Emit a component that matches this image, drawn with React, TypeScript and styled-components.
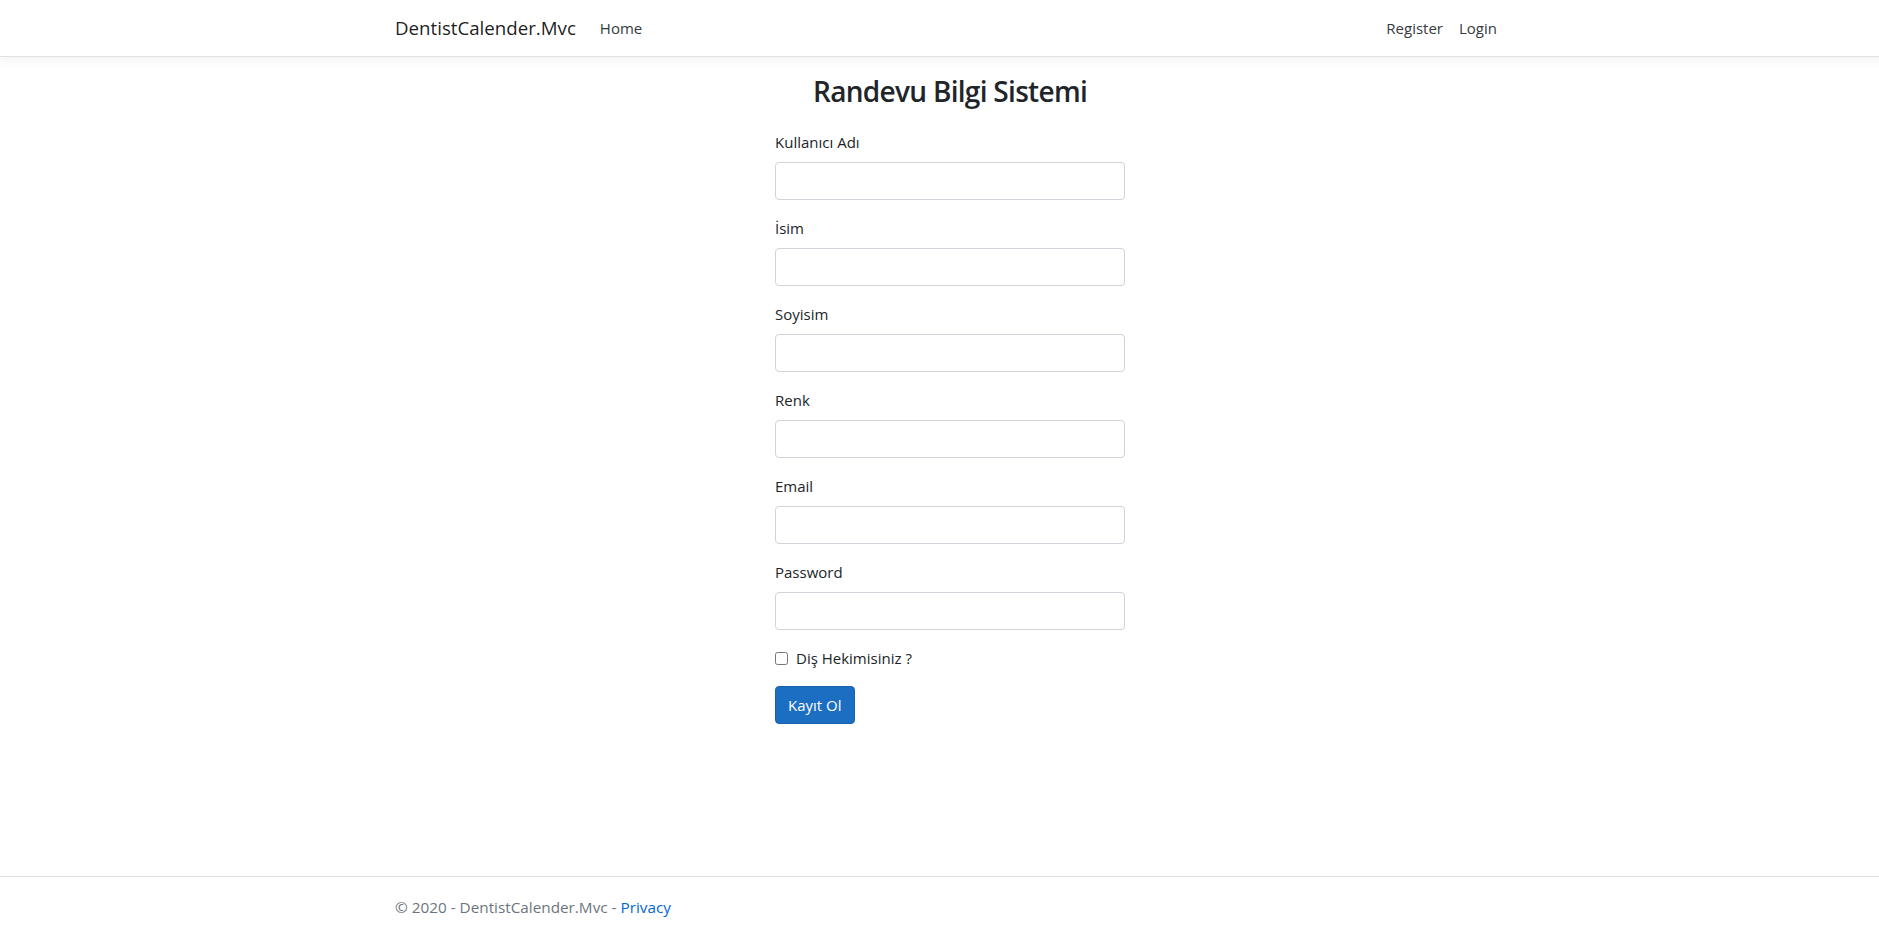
import styled, { createGlobalStyle } from "styled-components";

const GlobalStyle = createGlobalStyle`
  html,
  body {
    margin: 0;
    padding: 0;
    overflow: hidden;
    background: #fff;
  }
  body {
    font-family: "Open Sans", "Noto Sans", "Liberation Sans", sans-serif;
    font-size: 15px;
    line-height: 24px;
    color: #212529;
  }
  * {
    box-sizing: border-box;
  }
`;

// the original page was a little wider than this window, so its centre sits at 950px
const Page = styled.div`
  width: 1900px;
  min-height: 937px;
  display: flex;
  flex-direction: column;
`;

const Container = styled.div`
  width: 1140px;
  margin: 0 auto;
  padding: 0 15px;
`;

const NavBar = styled.nav`
  padding: 8px 16px;
  background: #fff;
  border-bottom: 1px solid #dee2e6;
  box-shadow: 0 4px 12px rgba(0, 0, 0, 0.05);
`;

const NavInner = styled(Container)`
  display: flex;
  align-items: center;
  padding: 0;
  width: 1110px;
`;

const Brand = styled.a`
  font-size: 18.7px;
  line-height: 30px;
  padding: 5px 0;
  margin-right: 16px;
  color: rgba(0, 0, 0, 0.9);
  text-decoration: none;
  white-space: nowrap;
`;

const NavList = styled.ul<{ $grow?: boolean }>`
  display: flex;
  list-style: none;
  margin: 0;
  padding: 0;
  flex-grow: ${(p) => (p.$grow ? 1 : 0)};
`;

const NavLink = styled.a`
  display: block;
  padding: 8px;
  color: #343a40;
  text-decoration: none;
`;

const Main = styled.main`
  flex: 1;
  padding-top: 16px;
`;

const Title = styled.h2`
  margin: 0 0 21px;
  text-align: center;
  font-size: 28px;
  line-height: 36px;
  font-weight: 600;
  letter-spacing: -0.7px;
`;

const FormCol = styled.div`
  width: 380px;
  margin-left: 365px;
  padding: 0 15px;
`;

const FormGroup = styled.div`
  margin-bottom: 16px;
`;

const Label = styled.label`
  display: inline-block;
  margin-bottom: 8px;
`;

const Input = styled.input`
  display: block;
  width: 100%;
  height: 38px;
  padding: 6px 12px;
  font: inherit;
  color: #495057;
  background: #fff;
  border: 1px solid #ced4da;
  border-radius: 4px;
`;

const CheckRow = styled.div`
  display: flex;
  align-items: center;
  height: 24px;
  margin-bottom: 16px;
`;

const CheckBox = styled.input`
  width: 13px;
  height: 13px;
  margin: 1px 8px 0 0;
`;

const SubmitButton = styled.button`
  height: 38px;
  padding: 6px 12px;
  font: inherit;
  color: #fff;
  background: #1b6ec2;
  border: 1px solid #1861ac;
  border-radius: 4px;
  cursor: pointer;
`;

const Footer = styled.footer`
  border-top: 1px solid #dee2e6;
  font-size: 15.3px;
  line-height: 60px;
  white-space: nowrap;
  color: #6c757d;
`;

const FooterLink = styled.a`
  color: #0366d6;
  text-decoration: none;
`;

const fields = ["Kullanıcı Adı", "İsim", "Soyisim", "Renk", "Email", "Password"];

export default function App() {
  return (
    <>
      <GlobalStyle />
      <Page>
        <NavBar>
          <NavInner>
            <Brand href="#">DentistCalender.Mvc</Brand>
            <NavList $grow>
              <li>
                <NavLink href="#">Home</NavLink>
              </li>
            </NavList>
            <NavList>
              <li>
                <NavLink href="#">Register</NavLink>
              </li>
              <li>
                <NavLink href="#">Login</NavLink>
              </li>
            </NavList>
          </NavInner>
        </NavBar>
        <Main>
          <Container>
            <Title>Randevu Bilgi Sistemi</Title>
            <FormCol>
              {fields.map((f) => (
                <FormGroup key={f}>
                  <Label>{f}</Label>
                  <Input type={f === "Password" ? "password" : "text"} />
                </FormGroup>
              ))}
              <CheckRow>
                <CheckBox type="checkbox" id="dis" />
                <label htmlFor="dis">Diş Hekimisiniz ?</label>
              </CheckRow>
              <SubmitButton type="submit">Kayıt Ol</SubmitButton>
            </FormCol>
          </Container>
        </Main>
        <Footer>
          <Container>
            © 2020 - DentistCalender.Mvc - <FooterLink href="#">Privacy</FooterLink>
          </Container>
        </Footer>
      </Page>
    </>
  );
}
